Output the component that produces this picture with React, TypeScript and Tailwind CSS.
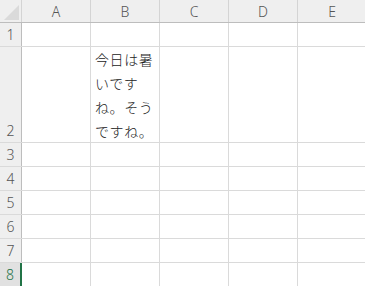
import React from "react";

const cols = ["A", "B", "C", "D", "E"];
const rows: { n: number; h: string }[] = [
  { n: 1, h: "h-[24px]" },
  { n: 2, h: "h-[96px]" },
  { n: 3, h: "h-[24px]" },
  { n: 4, h: "h-[24px]" },
  { n: 5, h: "h-[24px]" },
  { n: 6, h: "h-[24px]" },
  { n: 7, h: "h-[24px]" },
  { n: 8, h: "h-[24px]" },
];

export default function App() {
  return (
    <div
      className="w-[365px] h-[286px] overflow-hidden bg-white"
      style={{ fontFamily: '"Noto Sans", "Noto Sans CJK JP", sans-serif' }}
    >
      <div className="flex h-[23px] bg-[#efefef] border-b border-[#bdbdbd]">
        <div className="w-[22px] shrink-0 border-r border-[#d4d4d4] relative">
          <svg className="absolute right-[2px] bottom-[2px]" width="15" height="15" viewBox="0 0 15 15">
            <polygon points="15,0 15,15 0,15" fill="#dadada" />
          </svg>
        </div>
        {cols.map((c) => (
          <div
            key={c}
            className="w-[69px] shrink-0 border-r border-[#d4d4d4] flex items-center justify-center text-[14px] font-light text-[#555]"
          >
            {c}
          </div>
        ))}
      </div>
      {rows.map((r) => {
        const sel = r.n === 8;
        return (
          <div key={r.n} className={`flex ${r.h} border-b border-[#dadada]`}>
            <div
              className={
                sel
                  ? "w-[22px] shrink-0 bg-[#e1e1e1] border-r-2 border-[#217346] flex items-end justify-center pb-[1px] text-[14px] font-light text-[#217346]"
                  : "w-[22px] shrink-0 bg-[#efefef] border-r border-[#bdbdbd] flex items-end justify-center pb-[1px] text-[14px] font-light text-[#555]"
              }
            >
              {r.n}
            </div>
            {cols.map((c) => (
              <div key={c} className="w-[69px] shrink-0 border-r border-[#dadada]">
                {r.n === 2 && c === "B" ? (
                  <div
                    className="pl-[4px] text-[14px] leading-[24px] tracking-[0.6px] font-light text-[#222]"
                    style={{ fontFamily: '"Noto Sans CJK JP", sans-serif' }}
                  >
                    今日は暑
                    <br />
                    いです
                    <br />
                    ね。そう
                    <br />
                    ですね。
                  </div>
                ) : null}
              </div>
            ))}
          </div>
        );
      })}
    </div>
  );
}
